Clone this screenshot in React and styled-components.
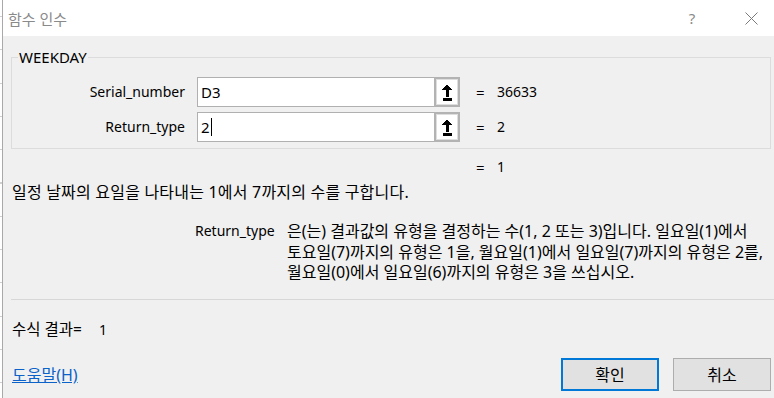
import React from 'react';
import styled, { createGlobalStyle } from 'styled-components';

const GlobalStyle = createGlobalStyle`
  html, body {
    margin: 0;
    padding: 0;
    background: #f0f0f0;
  }
  body {
    font-family: "Noto Sans", "Noto Sans CJK KR", sans-serif;
    font-size: 15px;
    color: #000;
  }
`;

const Window = styled.div`
  display: flex;
  width: 774px;
  height: 398px;
  overflow: hidden;
`;

// strip of the spreadsheet that peeks out behind the dialog
const Backdrop = styled.div`
  width: 2px;
  flex-shrink: 0;
  background: repeating-linear-gradient(
    to bottom,
    #fff 0 16px,
    #d0d0d0 16px 17px,
    #fff 17px 33.3px
  );
  border-right: 1px solid #a9a9a9;
`;

const Dialog = styled.div`
  flex: 1;
  display: flex;
  flex-direction: column;
  background: #f0f0f0;
`;

const TitleBar = styled.div`
  height: 36px;
  flex-shrink: 0;
  display: flex;
  align-items: center;
  background: #fff;
  padding-left: 5px;
`;

const Title = styled.div`
  flex: 1;
  color: #8a8a8a;
  font-size: 15px;
`;

const HelpMark = styled.div`
  width: 46px;
  margin-right: 13px;
  text-align: center;
  color: #8a8a8a;
  font-size: 15px;
`;

const CloseBox = styled.div`
  width: 46px;
  height: 36px;
  display: flex;
  align-items: center;
  justify-content: center;
`;

const Body = styled.div`
  flex: 1;
  display: flex;
  flex-direction: column;
  padding: 11px 3px 0 8px;
`;

const GroupBox = styled.fieldset`
  margin: 0;
  padding: 10px 0 6px 0;
  border: 1px solid #dcdcdc;
  min-width: 0;
`;

const Legend = styled.legend`
  padding: 0 1px;
  margin-left: 6px;
  line-height: 20px;
`;

const ArgGrid = styled.div`
  display: grid;
  grid-template-columns: 185px 263px 37px 1fr;
  row-gap: 5px;
  align-items: center;
  padding-left: ${({ $outside }) => ($outside ? '1px' : '0')};
  margin-top: ${({ $outside }) => ($outside ? '8px' : '0')};
  line-height: 20px;
  font-size: 14px;
`;

const ArgLabel = styled.div`
  text-align: right;
  padding-right: 12px;
`;

const Field = styled.div`
  display: flex;
  height: 30px;
`;

const FieldText = styled.div`
  flex: 1;
  display: flex;
  align-items: center;
  padding: 0 3px;
  background: #fff;
  border: 1px solid #b0b0b0;
  border-right: none;
  font-size: 15px;
`;

const Caret = styled.span`
  display: inline-block;
  width: 1px;
  height: 18px;
  margin-left: 1px;
  background: #000;
`;

const RefButton = styled.div`
  width: 26px;
  box-sizing: border-box;
  display: flex;
  align-items: center;
  justify-content: center;
  background: #fff;
  border: 2px solid #b3b3b3;
  box-shadow: inset 0 0 0 1px #dedede;
`;

const Equals = styled.div`
  padding-left: 16px;
  font-size: 15px;
`;

const Summary = styled.div`
  margin-top: 5px;
  padding-left: 1px;
  line-height: 20px;
  font-size: 16px;
  letter-spacing: 0.2px;
`;

const ArgHelp = styled.div`
  display: grid;
  grid-template-columns: 92px 1fr;
  padding-left: 184px;
  margin-top: 19px;
  line-height: 20.5px;
  white-space: nowrap;
  font-size: 16px;
`;

const HelpName = styled.div`
  font-size: 14px;
`;

const Divider = styled.div`
  margin: 16px -3px 0 0;
  border-top: 1px solid #d7d7d7;
`;

const Result = styled.div`
  margin-top: 19px;
  padding-left: 1px;
  line-height: 20px;
  font-size: 15.5px;
  span {
    margin-left: 17px;
    font-size: 14px;
  }
`;

const Footer = styled.div`
  display: flex;
  align-items: center;
  gap: 14px;
  margin-top: 18px;
  padding-left: 1px;
`;

const HelpLink = styled.a`
  flex: 1;
  color: #0b63c9;
  font-size: 16px;
  text-decoration: underline;
  cursor: pointer;
`;

const DialogButton = styled.button`
  width: 98px;
  height: 33px;
  box-sizing: border-box;
  background: #e1e1e1;
  border: ${({ $primary }) => ($primary ? '2px solid #0078d7' : '1px solid #adadad')};
  font-family: "Noto Sans", "Noto Sans CJK KR", sans-serif;
  font-size: 16px;
  color: #000;
  padding: 0;
`;

const CollapseIcon = () => (
  <svg width="10" height="17" viewBox="0 0 10 17" shapeRendering="crispEdges">
    <polygon points="5,0 0,6 10,6" fill="#000" />
    <rect x="3.5" y="5" width="3" height="8" fill="#000" />
    <rect x="0.5" y="14" width="9" height="3" fill="#000" />
  </svg>
);

const CloseIcon = () => (
  <svg width="13" height="13" viewBox="0 0 13 13">
    <path d="M0.5 0.5 L12.5 12.5 M12.5 0.5 L0.5 12.5" stroke="#7a7a7a" strokeWidth="1" />
  </svg>
);

const args = [
  { name: 'Serial_number', text: 'D3', value: '36633' },
  { name: 'Return_type', text: '2', value: '2', focused: true },
];

export default function App() {
  return (
    <>
      <GlobalStyle />
      <Window>
        <Backdrop />
        <Dialog>
          <TitleBar>
            <Title>함수 인수</Title>
            <HelpMark>?</HelpMark>
            <CloseBox>
              <CloseIcon />
            </CloseBox>
          </TitleBar>
          <Body>
            <GroupBox>
              <Legend>WEEKDAY</Legend>
              <ArgGrid>
                {args.map(a => (
                  <React.Fragment key={a.name}>
                    <ArgLabel>{a.name}</ArgLabel>
                    <Field>
                      <FieldText>
                        {a.text}
                        {a.focused && <Caret />}
                      </FieldText>
                      <RefButton>
                        <CollapseIcon />
                      </RefButton>
                    </Field>
                    <Equals>=</Equals>
                    <div>{a.value}</div>
                  </React.Fragment>
                ))}
              </ArgGrid>
            </GroupBox>
            <ArgGrid $outside>
              <div />
              <div />
              <Equals>=</Equals>
              <div>1</div>
            </ArgGrid>
            <Summary>일정 날짜의 요일을 나타내는 1에서 7까지의 수를 구합니다.</Summary>
            <ArgHelp>
              <HelpName>Return_type</HelpName>
              <div>
                은(는) 결과값의 유형을 결정하는 수(1, 2 또는 3)입니다. 일요일(1)에서
                <br />
                토요일(7)까지의 유형은 1을, 월요일(1)에서 일요일(7)까지의 유형은 2를,
                <br />
                월요일(0)에서 일요일(6)까지의 유형은 3을 쓰십시오.
              </div>
            </ArgHelp>
            <Divider />
            <Result>
              수식 결과=<span>1</span>
            </Result>
            <Footer>
              <HelpLink>도움말(H)</HelpLink>
              <DialogButton $primary>확인</DialogButton>
              <DialogButton>취소</DialogButton>
            </Footer>
          </Body>
        </Dialog>
      </Window>
    </>
  );
}
